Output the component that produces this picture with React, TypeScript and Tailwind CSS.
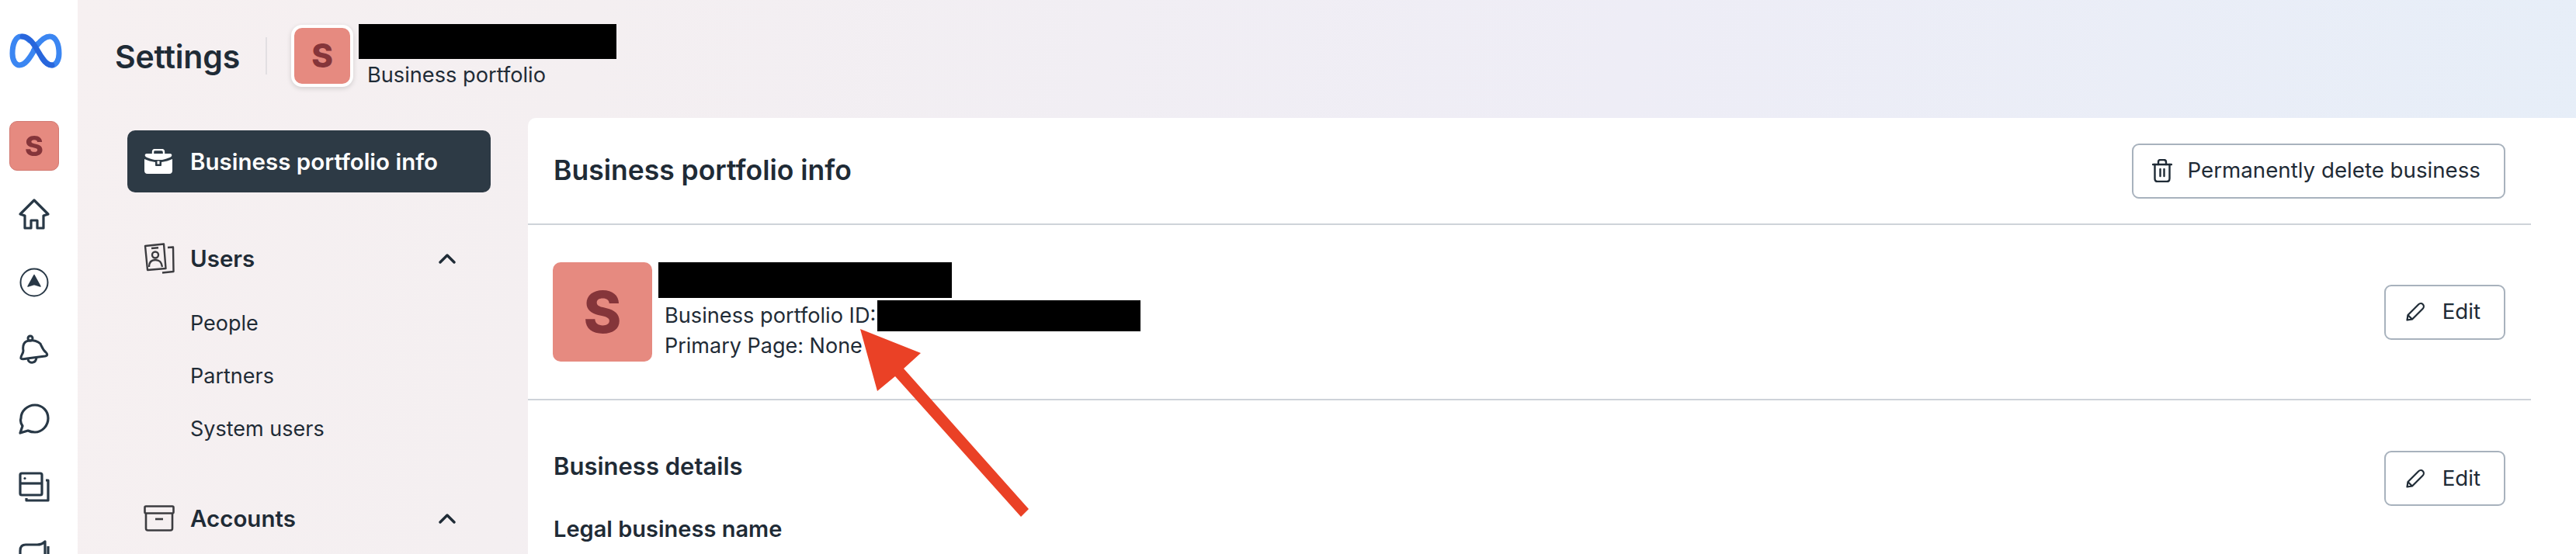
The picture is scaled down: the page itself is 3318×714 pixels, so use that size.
const font = "font-['Inter','Liberation_Sans',sans-serif]";

function MetaLogo() {
  return (
    <svg width="68" height="46" viewBox="0 0 68 46" fill="none" strokeWidth="7" strokeLinecap="round">
      <path d="M35 16 C42 7 47 4 52 4 C60 4 64 14 64 26 C64 35 60 41 55 41 C50 41 46 37 42 31" stroke="#3b86f2" />
      <path d="M33 20 C26 33 20 41 13 41 C8 41 4 35 4 26 C4 14 8 4 15 4 C19 4 22 5 26 9" stroke="#3b86f2" />
      <path d="M33 20 C28 28 36 14 36 14" stroke="#3b86f2" />
      <path d="M17 4 C24 4 29 10 34 18 L43 33 C47 39 50 41 55 41" stroke="#2866dc" />
    </svg>
  );
}

function RailIcon({ children }: { children: React.ReactNode }) {
  return <div className="h-[88px] w-[64px] flex items-center justify-center shrink-0">{children}</div>;
}

function HomeIcon() {
  return (
    <svg width="42" height="42" viewBox="0 0 42 42" fill="none" stroke="#283846" strokeWidth="3.2" strokeLinejoin="round">
      <path d="M21 3 L39 21 L33 23 V39 H25 V29 H17 V39 H9 V23 L3 21 Z" />
    </svg>
  );
}

function NavigateIcon() {
  return (
    <svg width="38" height="38" viewBox="0 0 38 38" fill="none">
      <circle cx="19" cy="19" r="17.5" stroke="#283846" strokeWidth="2" />
      <path d="M19 9.5 L27 24 L19 21.5 L11 24 Z" fill="#283846" stroke="#283846" strokeWidth="1.5" strokeLinejoin="round" />
    </svg>
  );
}

function BellIcon() {
  return (
    <svg width="38" height="42" viewBox="0 0 38 42" fill="none" stroke="#283846" strokeWidth="3" strokeLinejoin="round">
      <circle cx="14" cy="5" r="3" />
      <path d="M14 8 C5 8 4 15 5 21 C5 25 1 28 2 31 C3 32 6 32 10 31 L33 28 C37 27 36 25 34 23 C30 20 29 16 27 12 C24 9 18 7 14 8 Z" />
      <path d="M11 32 C12 38 21 38 22 30" />
    </svg>
  );
}

function ChatIcon() {
  return (
    <svg width="40" height="40" viewBox="0 0 40 40" fill="none" stroke="#283846" strokeWidth="3.2" strokeLinejoin="round">
      <path d="M21 2 C31 2 38 10 38 19 C38 29 30 37 21 37 C17 37 14 36 12 35 L2 38 L5 29 C3 26 2 22 3 19 C3 10 11 2 21 2 Z" />
    </svg>
  );
}

function PagesIcon() {
  return (
    <svg width="40" height="40" viewBox="0 0 40 40" fill="none" stroke="#283846" strokeWidth="3.2" strokeLinejoin="round">
      <rect x="2" y="2" width="28" height="28" rx="2" />
      <path d="M2 15 H30" />
      <circle cx="8" cy="8.5" r="1.6" fill="#283846" stroke="none" />
      <path d="M35 11 H38 V37 H10 V34" />
    </svg>
  );
}

function MegaphoneIcon() {
  return (
    <svg width="40" height="40" viewBox="0 0 40 40" fill="none" stroke="#283846" strokeWidth="3.2" strokeLinejoin="round">
      <path d="M2 14 C2 8 5 6 9 6 H24 C28 6 31 5 34 2 V32 C31 29 28 28 24 28 H9 C5 28 2 26 2 20 Z" />
      <path d="M38 8 V26" />
    </svg>
  );
}

function BriefcaseIcon() {
  return (
    <svg width="38" height="32" viewBox="0 0 38 32" className="shrink-0">
      <path d="M12 6 V4 C12 2 13 1 15 1 H23 C25 1 26 2 26 4 V6" fill="none" stroke="#fff" strokeWidth="2.4" />
      <path d="M2 9 C1 8 2 6 4 6 H34 C36 6 37 8 36 9 C35 11 33 11.5 24 14 H14 C5 11.5 3 11 2 9 Z" fill="#fff" />
      <path d="M1 13 C5 15 10 16 15 17 V21 C15 22 16 22 17 22 H21 C22 22 23 22 23 21 V17 C28 16 33 15 37 13 V28 C37 30 36 32 33 32 H5 C2 32 1 30 1 28 Z" fill="#fff" />
      <rect x="17.5" y="15.5" width="3" height="4" fill="#fff" />
    </svg>
  );
}

function UsersIcon() {
  return (
    <svg width="40" height="40" viewBox="0 0 40 40" fill="none" stroke="#3c3c40" strokeWidth="2.4" strokeLinejoin="round" className="shrink-0">
      <path d="M2 4 L26 1.5 L28.5 33 L5 35 Z" />
      <path d="M10 7 L19 6.3" />
      <circle cx="15" cy="15.5" r="4" />
      <path d="M7 31 C7 24 11 22 15 22 C20 22 23 24 24 31" />
      <path d="M31 6 L38 5.5 L38.5 37 L24 38.5" />
    </svg>
  );
}

function ArchiveIcon() {
  return (
    <svg width="40" height="34" viewBox="0 0 40 34" fill="none" stroke="#3c3c40" strokeWidth="2.6" strokeLinejoin="round" className="shrink-0">
      <rect x="1.5" y="1.5" width="37" height="9" rx="1.5" />
      <path d="M3 10.5 V30 C3 31.5 4 32.5 5.5 32.5 H34.5 C36 32.5 37 31.5 37 30 V10.5" />
      <path d="M15 18 H25" />
    </svg>
  );
}

function Chevron() {
  return (
    <svg width="22" height="13" viewBox="0 0 22 13" fill="none" stroke="#1f2b36" strokeWidth="3.4" strokeLinecap="round" strokeLinejoin="round" className="shrink-0">
      <path d="M2 11 L11 2 L20 11" />
    </svg>
  );
}

function TrashIcon() {
  return (
    <svg width="26" height="30" viewBox="0 0 26 30" fill="none" stroke="#1f2b36" strokeWidth="2.4" strokeLinejoin="round" strokeLinecap="round" className="shrink-0">
      <path d="M1 7 H25" />
      <path d="M8 7 V4 C8 2 9 1 11 1 H15 C17 1 18 2 18 4 V7" />
      <path d="M3.5 7 V25 C3.5 27.5 5 29 7 29 H19 C21 29 22.5 27.5 22.5 25 V7" />
      <path d="M10.5 13 V22 M15.5 13 V22" />
    </svg>
  );
}

function PencilIcon() {
  return (
    <svg width="24" height="24" viewBox="0 0 24 24" fill="none" stroke="#1f2b36" strokeWidth="2.2" strokeLinejoin="round" className="shrink-0">
      <path d="M1.5 22.5 L2.5 16 L16 2.5 C18 0.5 20.5 1 21.8 2.2 C23 3.5 23.5 6 21.5 8 L8 21.5 Z" />
      <path d="M2.5 16 L8 21.5" />
    </svg>
  );
}

function AvatarS({ className, textClass }: { className: string; textClass: string }) {
  return (
    <div className={`flex items-center justify-center bg-[#e68a80] shrink-0 ${className}`}>
      <span className={`font-extrabold text-[#85353a] leading-none ${textClass}`}>S</span>
    </div>
  );
}

function OutlineButton({ icon, label, className }: { icon: React.ReactNode; label: string; className: string }) {
  return (
    <button className={`flex items-center border-2 border-[#a8b2bd] rounded-[9px] bg-white h-[71px] text-[27.7px] text-[#1f2b36] shrink-0 ${className}`}>
      {icon}
      <span>{label}</span>
    </button>
  );
}

function SideSection({ icon, title, items }: { icon: React.ReactNode; title: string; items: string[] }) {
  return (
    <div>
      <div className="flex items-center h-[40px] pl-[21px] pr-[45px]">
        <div className="w-[60px] flex items-center">{icon}</div>
        <span className="flex-1 text-[29.5px] font-semibold text-[#1f2b36]">{title}</span>
        <Chevron />
      </div>
      {items.length > 0 && (
        <div className="mt-[46px] flex flex-col gap-[33px] pl-[81px] mb-[78px]">
          {items.map((item) => (
            <div key={item} className="h-[35px] leading-[35px] text-[27px] text-[#1f2b36]">
              {item}
            </div>
          ))}
        </div>
      )}
    </div>
  );
}

export default function App() {
  return (
    <div className={`${font} relative flex h-[714px] w-full overflow-hidden bg-white`}>
      <aside className="w-[100px] shrink-0 bg-white flex flex-col items-start pl-[12px]">
        <div className="mt-[43px] mb-[67px] shrink-0">
          <MetaLogo />
        </div>
        <div className="w-[64px] h-[64px] shrink-0 rounded-[10px] border border-[#d27a72] bg-[#e68a80] flex items-center justify-center">
          <span className="font-extrabold text-[#85353a] text-[36px] leading-none blur-[0.5px]">S</span>
        </div>
        <div className="mt-[12px] flex flex-col shrink-0">
          <RailIcon><HomeIcon /></RailIcon>
          <RailIcon><NavigateIcon /></RailIcon>
          <RailIcon><BellIcon /></RailIcon>
          <RailIcon><ChatIcon /></RailIcon>
          <RailIcon><PagesIcon /></RailIcon>
          <RailIcon><MegaphoneIcon /></RailIcon>
        </div>
      </aside>

      <main className="flex-1 min-w-0 flex flex-col bg-[linear-gradient(100deg,#f6f0f1_0%,#f4eff1_20%,#eeedf6_60%,#e6eef8_100%)]">
        <header className="h-[152px] shrink-0 flex items-start pl-[48px]">
          <h1 className="w-[161px] mt-[50px] text-[41px] leading-[46px] font-semibold text-[#1f2b36] tracking-[-0.2px] whitespace-nowrap">Settings</h1>
          <div className="ml-[33px] mt-[48px] w-[2px] h-[48px] bg-[#e2dfe2]" />
          <AvatarS
            className="ml-[31px] mt-[32px] w-[80px] h-[80px] rounded-[14px] border-[4px] border-white shadow-[0_2px_6px_rgba(0,0,0,0.15)]"
            textClass="text-[42px]"
          />
          <div className="ml-[7px] mt-[31px]">
            <div className="w-[332px] h-[45px] bg-black" />
            <div className="ml-[11px] mt-[5px] text-[27.2px] leading-[32px] text-[#1f2b36]">Business portfolio</div>
          </div>
        </header>

        <div className="flex-1 min-h-0 flex">
          <nav className="w-[580px] shrink-0 pl-[64px] pt-[16px] pr-[48px]">
            <div className="flex items-center h-[80px] rounded-[10px] bg-[#2d3a45] pl-[21px] gap-[22px]">
              <BriefcaseIcon />
              <span className="text-[29.5px] font-semibold text-white">Business portfolio info</span>
            </div>
            <div className="mt-[65px]">
              <SideSection icon={<UsersIcon />} title="Users" items={['People', 'Partners', 'System users']} />
              <SideSection icon={<ArchiveIcon />} title="Accounts" items={[]} />
            </div>
          </nav>

          <section className="flex-1 min-w-0 bg-white rounded-tl-[10px] pr-[58px]">
            <div className="h-[138px] flex items-center justify-between pl-[33px] pr-[33px] border-b-2 border-[#ced3d9]">
              <h2 className="text-[35.5px] font-semibold text-[#1f2b36]">Business portfolio info</h2>
              <OutlineButton icon={<span className="mr-[20px]"><TrashIcon /></span>} label="Permanently delete business" className="pl-[24px] pr-[30px]" />
            </div>

            <div className="h-[226px] flex items-center justify-between pl-[32px] pr-[33px] border-b-2 border-[#ced3d9]">
              <div className="flex items-start">
                <AvatarS className="w-[128px] h-[128px] rounded-[10px]" textClass="text-[74px]" />
                <div className="ml-[8px]">
                  <div className="w-[378px] h-[46px] bg-black" />
                  <div className="flex items-start mt-[3px]">
                    <span className="ml-[8px] text-[27.2px] leading-[40px] text-[#1f2b36]">Business portfolio ID:</span>
                    <div className="ml-[2px] w-[339px] h-[40px] bg-black" />
                  </div>
                  <div className="ml-[8px] text-[27px] leading-[38px] text-[#1f2b36]">Primary Page: None</div>
                </div>
              </div>
              <OutlineButton icon={<span className="mr-[23px]"><PencilIcon /></span>} label="Edit" className="pl-[26px] pr-[30px]" />
            </div>

            <div className="pl-[33px] pr-[33px] pt-[65px] flex items-start justify-between">
              <div>
                <h3 className="text-[31px] leading-[40px] font-semibold text-[#1f2b36] whitespace-nowrap">Business details</h3>
                <div className="mt-[41px] text-[29px] leading-[40px] font-semibold text-[#1f2b36] whitespace-nowrap">Legal business name</div>
              </div>
              <OutlineButton icon={<span className="mr-[23px]"><PencilIcon /></span>} label="Edit" className="pl-[26px] pr-[30px]" />
            </div>
          </section>
        </div>
      </main>

      {/* annotation arrow */}
      <svg className="absolute left-0 top-0 pointer-events-none" width="3318" height="714" viewBox="0 0 3318 714">
        <polygon points="1108,424 1186,455 1164,475 1325,656 1315,666 1153,485 1130,504" fill="#ea4126" />
      </svg>
    </div>
  );
}
